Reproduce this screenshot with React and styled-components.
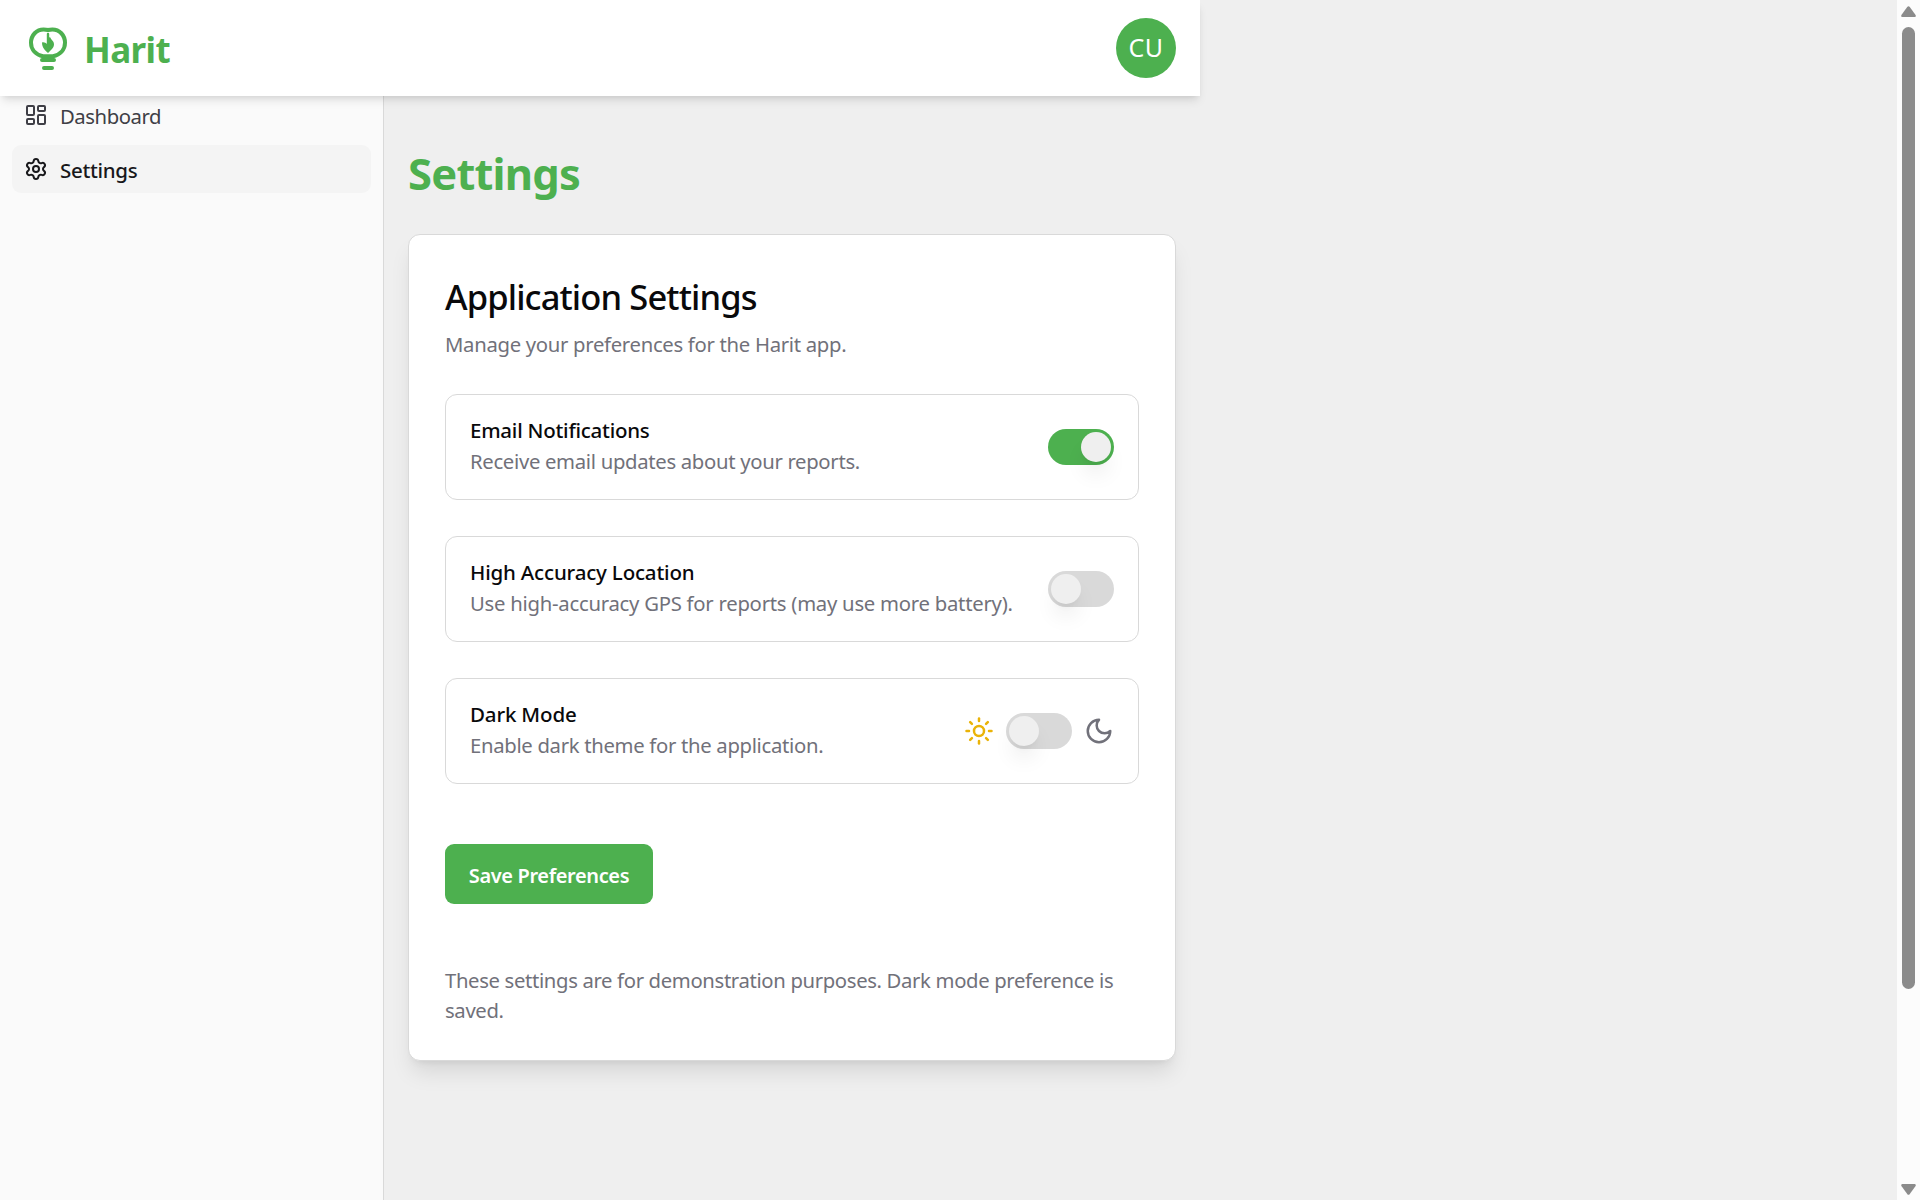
import React, { useState } from 'react';
import styled, { createGlobalStyle } from 'styled-components';
import { LayoutDashboard, Settings, Sun } from 'lucide-react';

const green = '#4db04f';
const line = '#d9d9d9';
const muted = '#71717a';

const GlobalStyle = createGlobalStyle`
  * { box-sizing: border-box; }
  html, body { margin: 0; height: 100%; overflow: hidden; }
  body {
    background: #efefef;
    color: #09090b;
    font-family: 'Noto Sans', 'Open Sans', sans-serif;
  }
  h1, h2, p { margin: 0; }
`;

const Screen = styled.div`
  display: flex;
  justify-content: space-between;
  height: 1200px;
`;

const Page = styled.div`
  display: flex;
  flex-direction: column;
  width: 1200px;
`;

const Header = styled.header`
  position: relative;
  z-index: 2;
  display: flex;
  align-items: center;
  justify-content: space-between;
  flex: none;
  height: 96px;
  padding: 0 24px;
  background: #fff;
  box-shadow: 0 6px 9px -1.5px rgba(0, 0, 0, 0.1), 0 3px 6px -3px rgba(0, 0, 0, 0.1);
`;

const Brand = styled.div`
  display: flex;
  align-items: center;
  gap: 12px;
  color: ${green};
`;

const BrandName = styled.span`
  padding-top: 4px;
  font-size: 35px;
  font-weight: 700;
  line-height: 48px;
  letter-spacing: -0.6px;
`;

const Avatar = styled.div`
  display: grid;
  place-items: center;
  width: 60px;
  height: 60px;
  padding-bottom: 2px;
  border-radius: 50%;
  background: ${green};
  color: #fff;
  font-size: 25px;
  line-height: 34px;
  letter-spacing: 0.4px;
`;

const Columns = styled.div`
  display: flex;
  flex: 1;
  min-height: 0;
`;

const Sidebar = styled.nav`
  display: flex;
  flex-direction: column;
  gap: 6px;
  width: 384px;
  margin-top: -5px;
  padding: 0 12px;
  border-right: 1px solid ${line};
  background: #fafafa;
`;

const NavItem = styled.a`
  display: flex;
  align-items: center;
  gap: 12px;
  height: 48px;
  padding: 0 12px;
  border-radius: 9px;
  background: ${(p) => (p.$active ? '#f4f4f4' : 'transparent')};
  color: ${(p) => (p.$active ? '#18181b' : '#3f3f46')};
`;

const NavLabel = styled.span`
  padding-top: 1px;
  font-size: ${(p) => (p.$active ? 20.5 : 20.3)}px;
  font-weight: ${(p) => (p.$active ? 500 : 400)};
  line-height: 30px;
  letter-spacing: ${(p) => (p.$active ? -0.3 : -0.44)}px;
`;

const Main = styled.main`
  flex: 1;
  padding: 50px 24px 0;
`;

const PageTitle = styled.h1`
  margin-bottom: 34px;
  color: ${green};
  font-size: 43.5px;
  font-weight: 700;
  line-height: 54px;
  letter-spacing: -0.77px;
`;

const Card = styled.section`
  padding: 36px 36px 35px;
  border: 1px solid ${line};
  border-radius: 12px;
  background: #fff;
  box-shadow: 0 15px 22.5px -4.5px rgba(0, 0, 0, 0.1), 0 6px 9px -6px rgba(0, 0, 0, 0.1);
`;

const CardTitle = styled.h2`
  margin-bottom: 6px;
  font-size: 34.5px;
  font-weight: 500;
  line-height: 52px;
  letter-spacing: -0.88px;
`;

const Muted = styled.p`
  color: ${muted};
  font-size: 20.3px;
  line-height: 30px;
  letter-spacing: ${(p) => p.$track}px;
  white-space: nowrap;
`;

const Rows = styled.div`
  display: flex;
  flex-direction: column;
  gap: 36px;
  margin: 35px 0 60px;
`;

const Row = styled.div`
  display: flex;
  align-items: center;
  justify-content: space-between;
  height: 106px;
  padding: 0 24px;
  border: 1px solid ${line};
  border-radius: 12px;
`;

const RowText = styled.div`
  display: flex;
  flex-direction: column;
  gap: 1px;
  padding-bottom: 3px;
`;

const RowLabel = styled.span`
  font-size: 20.5px;
  font-weight: 500;
  line-height: 30px;
  letter-spacing: ${(p) => p.$track}px;
`;

const Controls = styled.div`
  display: flex;
  align-items: center;
  gap: 12px;
`;

const Track = styled.button`
  display: flex;
  justify-content: ${(p) => (p.$on ? 'flex-end' : 'flex-start')};
  width: 66px;
  height: 36px;
  padding: 3px;
  border: 0;
  border-radius: 18px;
  background: ${(p) => (p.$on ? green : line)};
`;

const Thumb = styled.span`
  width: 30px;
  height: 30px;
  border-radius: 50%;
  background: #efefef;
  box-shadow: 0 15px 22.5px -4.5px rgba(0, 0, 0, 0.1), 0 6px 9px -6px rgba(0, 0, 0, 0.1);
`;

const SaveButton = styled.button`
  display: block;
  width: 208px;
  height: 60px;
  margin-bottom: 61px;
  padding: 3px 0 0;
  border: 0;
  border-radius: 9px;
  background: ${green};
  color: #fff;
  font-family: inherit;
  font-size: 20px;
  font-weight: 600;
  line-height: 30px;
  letter-spacing: -0.37px;
`;

const Footnote = styled(Muted)`
  white-space: normal;
`;

const Scrollbar = styled.div`
  display: flex;
  flex-direction: column;
  align-items: center;
  width: 23px;
  padding: 6px 0 5px;
  background: #fcfcfc;
  color: #8b8b8b;
`;

const ScrollThumb = styled.div`
  width: 13px;
  height: 962px;
  margin: 10px 0 auto;
  border-radius: 7px;
  background: currentColor;
`;

const LineIcon = styled.svg`
  fill: none;
  stroke: currentColor;
  stroke-width: 2;
  stroke-linecap: round;
  stroke-linejoin: round;
`;

const MoonIcon = styled(LineIcon)`
  color: ${muted};
`;

function Logo() {
  return (
    <LineIcon width="48" height="48" viewBox="0 0 24 24">
      <path d="M9.5 16.1C6 15.4 3.5 12.9 3.5 9.4C3.5 5.6 6.3 2.7 9.8 2.7C10.6 2.7 11.4 2.8 12 3C12.6 2.8 13.4 2.7 14.2 2.7C17.7 2.7 20.5 5.6 20.5 9.4C20.5 12.9 18 15.4 14.5 16.1Z" />
      <path d="M9 18h6M10 22h4" />
      <path
        d="M11.4 5C11.4 4.2 12.6 4.2 12.6 5V6.6L13.2 6.7C13.4 7.8 15 8.4 15 10.1C15 12 13.6 12.9 12 14.5C10.6 13 9 12 9 9.2C10 8.9 10.9 9.4 11.4 10Z"
        fill="currentColor"
        stroke="none"
      />
    </LineIcon>
  );
}

function Moon() {
  return (
    <MoonIcon width="30" height="30" viewBox="0 0 24 24">
      <path d="M12 3a6 6 0 0 0 9 9 9 9 0 1 1-9-9Z" />
    </MoonIcon>
  );
}

function Arrow({ down }) {
  return (
    <svg width="15" height="11" viewBox="0 0 15 11" fill="currentColor">
      <path d={down ? 'M1.3 0H13.7Q15.6 .4 14.4 2.2L8.8 9.9Q7.5 11.6 6.2 9.9L.6 2.2Q-.6 .4 1.3 0Z' : 'M1.3 11H13.7Q15.6 10.6 14.4 8.8L8.8 1.1Q7.5 -.6 6.2 1.1L.6 8.8Q-.6 10.6 1.3 11Z'} />
    </svg>
  );
}

function Switch({ initial = false, label }) {
  const [on, setOn] = useState(initial);
  return (
    <Track $on={on} role="switch" aria-checked={on} aria-label={label} onClick={() => setOn(!on)}>
      <Thumb />
    </Track>
  );
}

function SettingRow({ label, labelTrack, text, textTrack, children }) {
  return (
    <Row>
      <RowText>
        <RowLabel $track={labelTrack}>{label}</RowLabel>
        <Muted $track={textTrack}>{text}</Muted>
      </RowText>
      <Controls>{children}</Controls>
    </Row>
  );
}

export default function App() {
  return (
    <>
      <GlobalStyle />
      <Screen>
        <Page>
          <Header>
            <Brand>
              <Logo />
              <BrandName>Harit</BrandName>
            </Brand>
            <Avatar>CU</Avatar>
          </Header>
          <Columns>
            <Sidebar>
              <NavItem>
                <LayoutDashboard size={24} />
                <NavLabel>Dashboard</NavLabel>
              </NavItem>
              <NavItem $active>
                <Settings size={24} />
                <NavLabel $active>Settings</NavLabel>
              </NavItem>
            </Sidebar>
            <Main>
              <PageTitle>Settings</PageTitle>
              <Card>
                <CardTitle>Application Settings</CardTitle>
                <Muted $track={-0.3}>Manage your preferences for the Harit app.</Muted>
                <Rows>
                  <SettingRow label="Email Notifications" labelTrack={-0.24} text="Receive email updates about your reports." textTrack={-0.31}>
                    <Switch initial label="Email Notifications" />
                  </SettingRow>
                  <SettingRow label="High Accuracy Location" labelTrack={-0.18} text="Use high-accuracy GPS for reports (may use more battery)." textTrack={-0.25}>
                    <Switch label="High Accuracy Location" />
                  </SettingRow>
                  <SettingRow label="Dark Mode" labelTrack={-0.16} text="Enable dark theme for the application." textTrack={-0.31}>
                    <Sun size={30} color="#eab308" />
                    <Switch label="Dark Mode" />
                    <Moon />
                  </SettingRow>
                </Rows>
                <SaveButton>Save Preferences</SaveButton>
                <Footnote $track={-0.35}>
                  These settings are for demonstration purposes. Dark mode preference is saved.
                </Footnote>
              </Card>
            </Main>
          </Columns>
        </Page>
        <Scrollbar>
          <Arrow />
          <ScrollThumb />
          <Arrow down />
        </Scrollbar>
      </Screen>
    </>
  );
}
